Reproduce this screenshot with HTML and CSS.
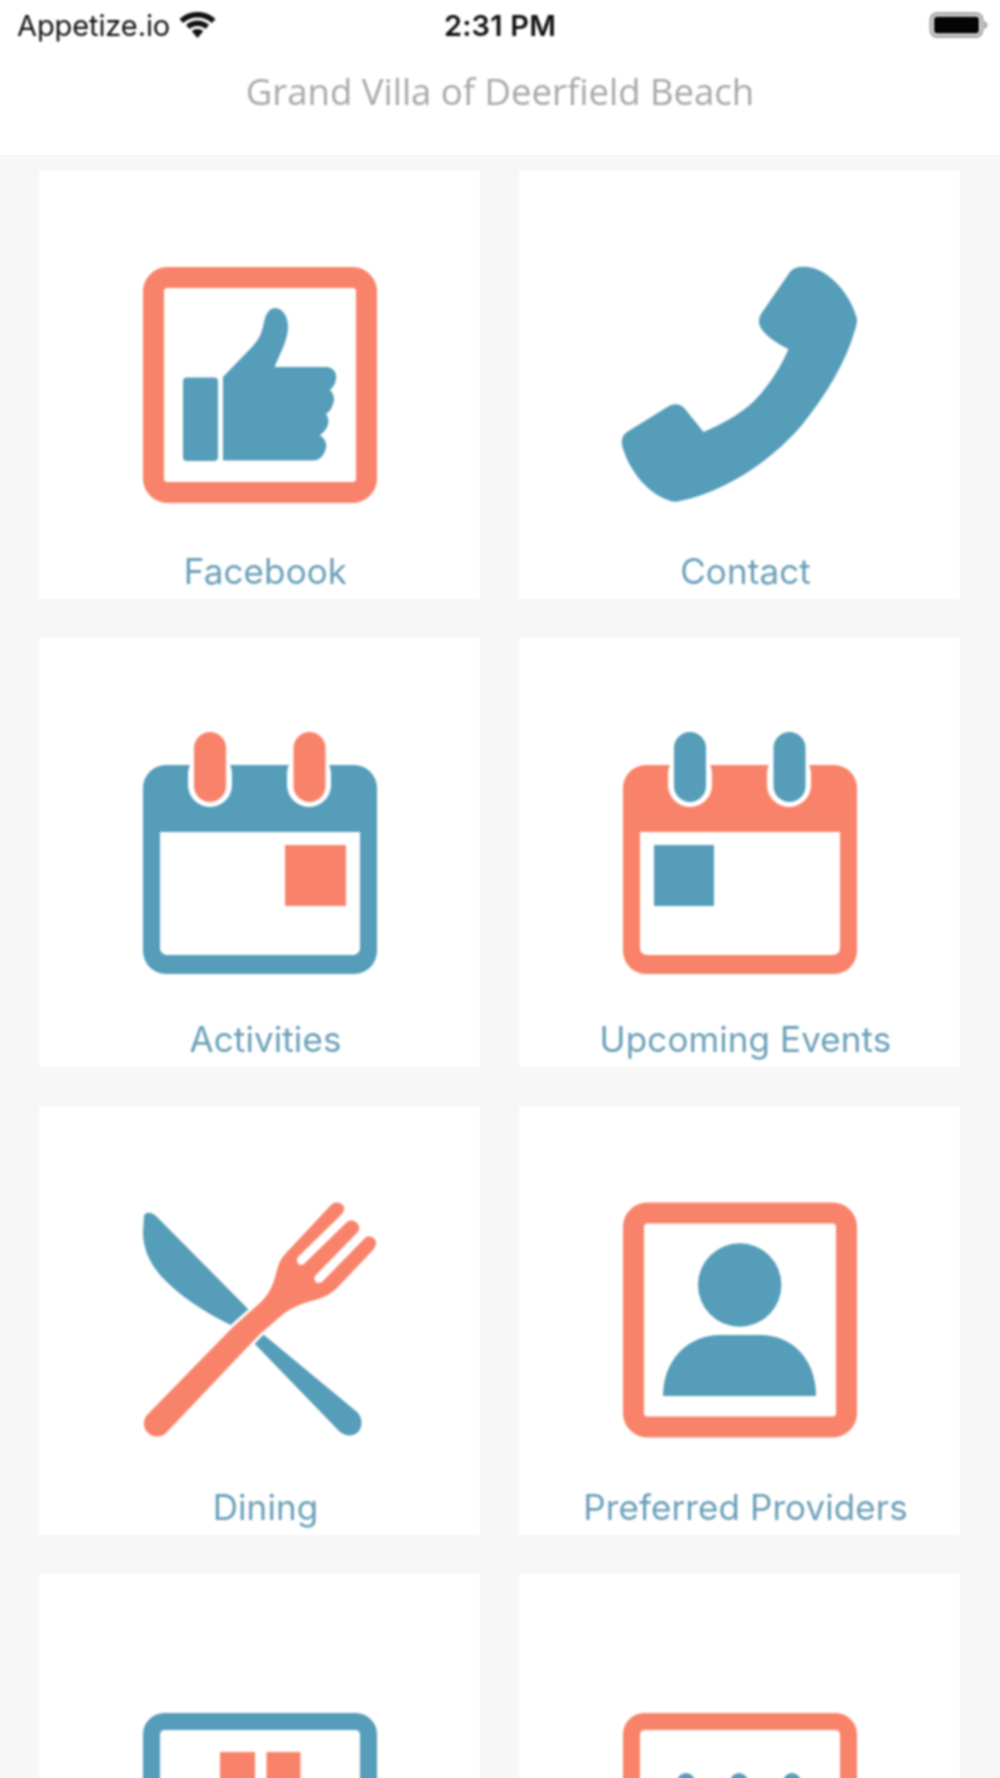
FILE: index.html
```html
<!DOCTYPE html>
<html lang="en">
<head>
<meta charset="utf-8">
<title>Grand Villa of Deerfield Beach</title>
<link rel="stylesheet" href="styles.css">
</head>
<body>
<div class="app">
  <header class="header">
    <div class="status">
      <div class="status-left">
        <span class="carrier">Appetize.io</span>
        <svg class="wifi" viewBox="0 0 36 26"><path d="M18 0C11 0 5 2.500 0 7l3.500 4C7.500 7.500 12.500 5.500 18 5.500S28.500 7.500 32.500 11L36 7C31 2.500 25 0 18 0z"/><path d="M18 8.500c-4.500 0-8.500 1.600-11.500 4.500l3.500 4c2-2 5-3 8-3s6 1 8 3l3.500-4C26.500 10.100 22.500 8.500 18 8.500z"/><path d="M18 17c-2.300 0-4.300.8-5.700 2.200L18 26l5.700-6.800C22.300 17.800 20.300 17 18 17z"/></svg>
      </div>
      <span class="time">2:31 PM</span>
      <div class="status-right">
        <svg class="battery" viewBox="0 0 59 26"><rect class="battery-case" x="2" y="1.500" width="51" height="23" rx="6"/><rect class="battery-level" x="5" y="4.500" width="45" height="17" rx="3"/><path class="battery-nub" d="M55 9c2 .5 3.500 2 3.500 4s-1.500 3.500-3.500 4z"/></svg>
      </div>
    </div>
    <h1 class="title">Grand Villa of Deerfield Beach</h1>
  </header>

  <main class="grid">
    <a class="card">
      <svg class="icon icon-low" width="234" height="236" viewBox="0 0 234 236">
        <rect class="frame-coral" x="10.500" y="10.500" width="213" height="215" rx="14"/>
        <rect class="fill-blue" x="40" y="110.500" width="35" height="83.500" rx="4"/>
        <path class="fill-blue" d="M80 110 L108 81 C116 73 119 66 121 55 C123 46 127 41 132 41 C140 41 145 50 145 60 C145 72 138 85 131.500 100 H183 C190 100 194 106 193 112 C192.500 117 190 120 187 123 C191 127 192 132 190 137 C188.500 142 186 145 183 147 C186 151 186 156 184 160 C182 164 179 167 176.500 168 C181 171 184 175 183 181 C181 189 177 193 170 193.500 H80 Z"/>
      </svg>
      <span class="label">Facebook</span>
    </a>
    <a class="card">
      <svg class="icon icon-low" width="236" height="236" viewBox="0 0 236 236">
        <path class="fill-blue" d="M168 5 C172 0 178 -1 186 0 C208 3 229 28 235 52 C235 56 234 60 233 63 C224 95 204 128 180 158 C150 193 105 224 58 234 C54 235 50 235 46 233 C25 226 6 202 0 178 C-1 172 1 168 5 165 L47 139 C53 136 59 137 63 142 L81.500 165 C100 157 118 147 130 136 C146 120 158 102 166.500 82 C158 78 148 72 141 64 C136 58 136 52 139 47 Z"/>
      </svg>
      <span class="label">Contact</span>
    </a>
    <a class="card">
      <svg class="icon icon-calendar" width="234" height="242" viewBox="0 0 234 242">
        <rect class="fill-blue" x="0" y="33" width="234" height="209" rx="23"/>
        <path class="fill-white" d="M17 100 H217 V216 a7 7 0 0 1 -7 7 H24 a7 7 0 0 1 -7 -7 Z"/>
        <rect class="fill-white" x="45" y="20" width="44" height="55" rx="22"/>
        <rect class="fill-white" x="144" y="20" width="44" height="55" rx="22"/>
        <rect class="fill-coral" x="51" y="0" width="32" height="70" rx="16"/>
        <rect class="fill-coral" x="150.500" y="0" width="32" height="70" rx="16"/>
        <rect class="fill-coral" x="142" y="113" width="61" height="61"/>
      </svg>
      <span class="label">Activities</span>
    </a>
    <a class="card">
      <svg class="icon icon-calendar" width="234" height="242" viewBox="0 0 234 242">
        <rect class="fill-coral" x="0" y="33" width="234" height="209" rx="23"/>
        <path class="fill-white" d="M17 100 H217 V216 a7 7 0 0 1 -7 7 H24 a7 7 0 0 1 -7 -7 Z"/>
        <rect class="fill-white" x="45" y="20" width="44" height="55" rx="22"/>
        <rect class="fill-white" x="144" y="20" width="44" height="55" rx="22"/>
        <rect class="fill-blue" x="51" y="0" width="32" height="70" rx="16"/>
        <rect class="fill-blue" x="150.500" y="0" width="32" height="70" rx="16"/>
        <rect class="fill-blue" x="31" y="113" width="60" height="61"/>
      </svg>
      <span class="label">Upcoming Events</span>
    </a>
    <a class="card">
      <svg class="icon" width="234" height="236" viewBox="0 0 234 236">
        <path class="fill-blue" d="M1 14 C3 9 9 10 14 15 L110 112 L90 124 C65 112 43 98 26 82 C8 66 0 48 0 30 Z"/>
        <path class="fill-blue" d="M115 128 L214 210 C220 216 220 226 214 231 C209 235 201 234 196 229 L108 138 Z"/>
        <path class="fill-coral fork" d="M5 212 L90 125 L118 100 C128 90 131 80 134 68 C136 60 139 55 144 50 L188 3 C192 -1 199 0 201 5 C202 8 200 11 197 14 L155 55 C152 60 156 65 161 62 L204 20 C208 17 214 19 216 24 C217 27 215 30 213 32 L172 74 C170 79 174 83 179 80 L222 36 C226 33 232 35 233 40 C233 43 232 46 230 48 L195 85 C187 93 178 97 168 99 C155 103 146 107 138 114 L117 132 L23 231 A12.500 12.500 0 0 1 5 212 Z"/>
      </svg>
      <span class="label">Dining</span>
    </a>
    <a class="card">
      <svg class="icon" width="234" height="236" viewBox="0 0 234 236">
        <rect class="frame-coral" x="10.500" y="11" width="213" height="214" rx="14"/>
        <circle class="fill-blue" cx="116.700" cy="83" r="41.700"/>
        <path class="fill-blue" d="M40 194 C40 158 65 133 97 133 H137 C170 133 193 158 193 194 Z"/>
      </svg>
      <span class="label">Preferred Providers</span>
    </a>
    <a class="card">
      <svg class="icon icon-late" width="234" height="236" viewBox="0 0 234 236">
        <rect class="frame-blue" x="8.500" y="8.500" width="217" height="219" rx="13"/>
        <rect class="fill-coral" x="77" y="39" width="35" height="70"/>
        <rect class="fill-coral" x="123.500" y="39" width="34" height="70"/>
      </svg>
    </a>
    <a class="card">
      <svg class="icon icon-late" width="234" height="236" viewBox="0 0 234 236">
        <rect class="frame-coral-thin" x="8.500" y="8.500" width="217" height="219" rx="13"/>
        <circle class="fill-blue" cx="63" cy="69" r="9"/>
        <circle class="fill-blue" cx="116" cy="69" r="9"/>
        <circle class="fill-blue" cx="169" cy="69" r="9"/>
      </svg>
    </a>
  </main>
</div>
</body>
</html>
```

FILE: styles.css
```css
* {
  box-sizing: border-box;
}

html,
body {
  margin: 0;
  padding: 0;
  height: 1778px;
  overflow: hidden;
  background: #f7f7f7;
}

.app {
  width: 1000px;
  height: 1778px;
  overflow: hidden;
}

.header {
  height: 155px;
  background: #fff;
  display: flex;
  flex-direction: column;
}

.status {
  height: 50px;
  padding: 0 12px;
  display: grid;
  grid-template-columns: 1fr auto 1fr;
  align-items: center;
  color: #111;
  font-family: Inter, "Liberation Sans", sans-serif;
  filter: blur(0.8px);
}

.status-left {
  display: flex;
  align-items: center;
  gap: 9px;
  padding-left: 5px;
}

.carrier {
  font-size: 29px;
  letter-spacing: -0.1px;
}

.wifi {
  width: 37px;
  height: 26px;
  fill: #111;
}

.time {
  font-size: 29px;
  font-weight: 600;
  letter-spacing: 0.2px;
}

.status-right {
  display: flex;
  justify-content: flex-end;
}

.battery {
  width: 59px;
  height: 26px;
}

.battery-case {
  fill: #fff;
  stroke: #aaa;
  stroke-width: 3;
}

.battery-level {
  fill: #050505;
}

.battery-nub {
  fill: #aaa;
}

.title {
  margin: 16px 0 0;
  text-align: center;
  font-family: "Open Sans", sans-serif;
  font-size: 36.500px;
  font-weight: 400;
  line-height: 50px;
  color: #a8a8a8;
  filter: blur(0.8px);
}

.grid {
  padding: 15px 40px 0 39px;
  display: grid;
  grid-template-columns: 441px 441px;
  grid-auto-rows: 429px;
  column-gap: 39px;
  row-gap: 39px;
}

.card {
  background: #fff;
  display: flex;
  flex-direction: column;
  align-items: center;
  filter: blur(0.8px);
}

.icon {
  display: block;
  flex: none;
  margin-top: 96px;
  overflow: visible;
}

.icon-low {
  margin-top: 97px;
}

.icon-calendar {
  margin-top: 94px;
}

.icon-late {
  margin-top: 139px;
}

.label {
  margin-top: auto;
  margin-bottom: 7px;
  padding-left: 12px;
  height: 42px;
  line-height: 42px;
  font-family: Inter, Roboto, sans-serif;
  font-size: 35px;
  letter-spacing: 0.1px;
  color: #6a9fb8;
}

.fill-blue {
  fill: #559db9;
}

.fill-coral {
  fill: #f9836a;
}

.fill-white {
  fill: #fff;
}

.fork {
  stroke: #fff;
  stroke-width: 6;
  paint-order: stroke;
}

.frame-coral,
.frame-coral-thin,
.frame-blue {
  fill: none;
}

.frame-coral {
  stroke: #f9836a;
  stroke-width: 21;
}

.frame-coral-thin {
  stroke: #f9836a;
  stroke-width: 17;
}

.frame-blue {
  stroke: #559db9;
  stroke-width: 17;
}
```
